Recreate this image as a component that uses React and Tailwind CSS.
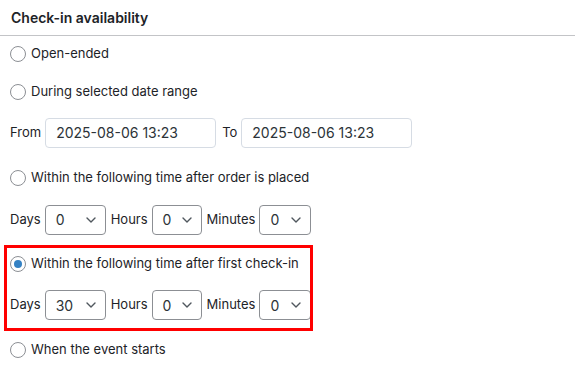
import React from "react";

function Radio({ checked, label }) {
  return (
    <div className="flex items-center gap-[5px] pl-[10px] pt-[2px]">
      <span className="w-[16px] h-[16px] rounded-full border border-[#8c8f94] bg-white flex items-center justify-center">
        {checked && <span className="w-[8px] h-[8px] rounded-full bg-[#3582c4]" />}
      </span>
      <span className="text-[13px] text-[#1d2327]">{label}</span>
    </div>
  );
}

function Chevron() {
  return (
    <svg width="10" height="6" viewBox="0 0 10 6" fill="none">
      <path d="M1 1l4 4 4-4" stroke="#50575e" strokeWidth="1.4" strokeLinecap="round" strokeLinejoin="round" />
    </svg>
  );
}

function Select({ value, w }) {
  return (
    <div className={`${w} h-[30px] border border-[#8c8f94] rounded-[4px] bg-white flex items-center justify-between pl-[10px] pr-[9px] text-[14px] text-[#2c3338]`}>
      <span>{value}</span>
      <Chevron />
    </div>
  );
}

function TimeRow({ days }) {
  return (
    <div className="flex items-center pl-[10px] pt-[1px] text-[13px] text-[#1d2327]">
      <span>Days</span>
      <span className="ml-[4px]"><Select value={days} w="w-[61px]" /></span>
      <span className="ml-[5px]">Hours</span>
      <span className="ml-[4px]"><Select value="0" w="w-[50px]" /></span>
      <span className="ml-[5px]">Minutes</span>
      <span className="ml-[4px]"><Select value="0" w="w-[52px]" /></span>
    </div>
  );
}

function DateInput() {
  return (
    <div className="w-[171px] h-[30px] border border-[#d6dce4] rounded-[4px] bg-white flex items-center pl-[10px] text-[14px] text-[#2c3338]">
      2025-08-06 13:23
    </div>
  );
}

export default function App() {
  return (
    <div className="relative w-[575px] h-[386px] bg-white overflow-hidden" style={{ fontFamily: "Inter, 'Liberation Sans', sans-serif" }}>
      <div className="h-[36px] border-b border-[#c3c4c7] flex items-center pl-[11px] pb-[1px] text-[14px] font-semibold text-[#1d2327]">
        Check-in availability
      </div>
      <div className="h-[34px] flex items-center"><Radio label="Open-ended" /></div>
      <div className="h-[42px] flex items-center"><Radio label="During selected date range" /></div>
      <div className="h-[41px] flex items-center pl-[10px] text-[13px] text-[#1d2327]">
        <span>From</span>
        <span className="ml-[4px]"><DateInput /></span>
        <span className="ml-[6px]">To</span>
        <span className="ml-[4px]"><DateInput /></span>
      </div>
      <div className="h-[48px] flex items-center"><Radio label="Within the following time after order is placed" /></div>
      <div className="h-[36px] flex items-center"><TimeRow days="0" /></div>
      <div className="h-[52px] flex items-center"><Radio checked label="Within the following time after first check-in" /></div>
      <div className="h-[31px] flex items-center"><TimeRow days="30" /></div>
      <div className="h-[58px] flex items-center"><Radio label="When the event starts" /></div>
      <div className="absolute left-[4px] top-[245px] w-[309px] h-[86px] border-[3px] border-[#ff0000] pointer-events-none" />
    </div>
  );
}
